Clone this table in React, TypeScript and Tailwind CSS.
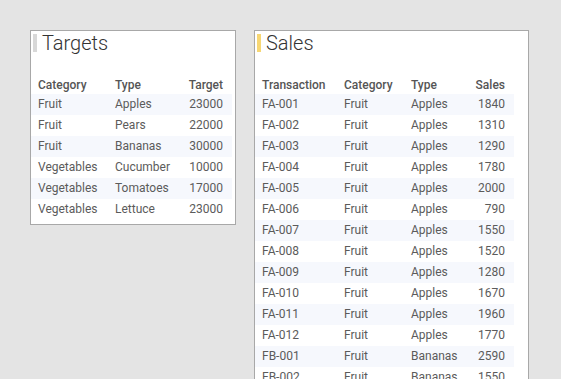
const targets = [
  { category: 'Fruit', type: 'Apples', target: 23000 },
  { category: 'Fruit', type: 'Pears', target: 22000 },
  { category: 'Fruit', type: 'Bananas', target: 30000 },
  { category: 'Vegetables', type: 'Cucumber', target: 10000 },
  { category: 'Vegetables', type: 'Tomatoes', target: 17000 },
  { category: 'Vegetables', type: 'Lettuce', target: 23000 },
];

const sales = [
  { id: 'FA-001', category: 'Fruit', type: 'Apples', sales: 1840 },
  { id: 'FA-002', category: 'Fruit', type: 'Apples', sales: 1310 },
  { id: 'FA-003', category: 'Fruit', type: 'Apples', sales: 1290 },
  { id: 'FA-004', category: 'Fruit', type: 'Apples', sales: 1780 },
  { id: 'FA-005', category: 'Fruit', type: 'Apples', sales: 2000 },
  { id: 'FA-006', category: 'Fruit', type: 'Apples', sales: 790 },
  { id: 'FA-007', category: 'Fruit', type: 'Apples', sales: 1550 },
  { id: 'FA-008', category: 'Fruit', type: 'Apples', sales: 1520 },
  { id: 'FA-009', category: 'Fruit', type: 'Apples', sales: 1280 },
  { id: 'FA-010', category: 'Fruit', type: 'Apples', sales: 1670 },
  { id: 'FA-011', category: 'Fruit', type: 'Apples', sales: 1960 },
  { id: 'FA-012', category: 'Fruit', type: 'Apples', sales: 1770 },
  { id: 'FB-001', category: 'Fruit', type: 'Bananas', sales: 2590 },
  { id: 'FB-002', category: 'Fruit', type: 'Bananas', sales: 1550 },
];

const PanelTitle = ({ title, barClass }: { title: string; barClass: string }) => (
  <div className="flex items-center h-[18px] mt-[3px] ml-[2px]">
    <div className={`w-1 h-[18px] ${barClass}`} />
    <span className="ml-[5px] text-[20px] font-light leading-[20px] text-[#333]">{title}</span>
  </div>
);

export default function App() {
  return (
    <div
      className="h-screen w-full overflow-hidden bg-[#e4e4e4] text-[12px] leading-[18px] text-[#5b5b5b]"
      style={{ fontFamily: 'Roboto, "Liberation Sans", sans-serif' }}
    >
      <div className="flex items-start gap-[18px] pt-[30px] pl-[30px]">
        {/* Targets */}
        <div className="w-[206px] h-[195px] bg-white border border-[#a8a8a8]">
          <PanelTitle title="Targets" barClass="bg-[#d8d8d8]" />
          <table className="mt-[21px] w-[201px] border-collapse">
            <thead>
              <tr className="h-[21px] text-[#555]">
                <th className="w-[77px] pl-[7px] text-left align-bottom font-medium">Category</th>
                <th className="pl-[7px] text-left align-bottom font-medium">Type</th>
                <th className="pr-[9px] text-right align-bottom font-medium">Target</th>
              </tr>
            </thead>
            <tbody>
              {targets.map((row, i) => (
                <tr key={i} className={`h-[21px] ${i % 2 === 0 ? 'bg-[#f6f8fd]' : ''}`}>
                  <td className="pl-[7px] pb-[1px]">{row.category}</td>
                  <td className="pl-[7px] pb-[1px]">{row.type}</td>
                  <td className="pr-[9px] pb-[1px] text-right">{row.target}</td>
                </tr>
              ))}
            </tbody>
          </table>
        </div>

        {/* Sales */}
        <div className="w-[275px] bg-white border border-[#a8a8a8] pb-4">
          <PanelTitle title="Sales" barClass="bg-[#f7d774]" />
          <table className="mt-[21px] w-[259px] border-collapse">
            <thead>
              <tr className="h-[21px] text-[#555]">
                <th className="w-[82px] pl-[7px] text-left align-bottom font-medium">Transaction</th>
                <th className="w-[67px] pl-[7px] text-left align-bottom font-medium">Category</th>
                <th className="pl-[7px] text-left align-bottom font-medium">Type</th>
                <th className="pr-[9px] text-right align-bottom font-medium">Sales</th>
              </tr>
            </thead>
            <tbody>
              {sales.map((row, i) => (
                <tr key={row.id} className={`h-[21px] ${i % 2 === 0 ? 'bg-[#f6f8fd]' : ''}`}>
                  <td className="pl-[7px] pb-[1px]">{row.id}</td>
                  <td className="pl-[7px] pb-[1px]">{row.category}</td>
                  <td className="pl-[7px] pb-[1px]">{row.type}</td>
                  <td className="pr-[9px] pb-[1px] text-right">{row.sales}</td>
                </tr>
              ))}
            </tbody>
          </table>
        </div>
      </div>
    </div>
  );
}
